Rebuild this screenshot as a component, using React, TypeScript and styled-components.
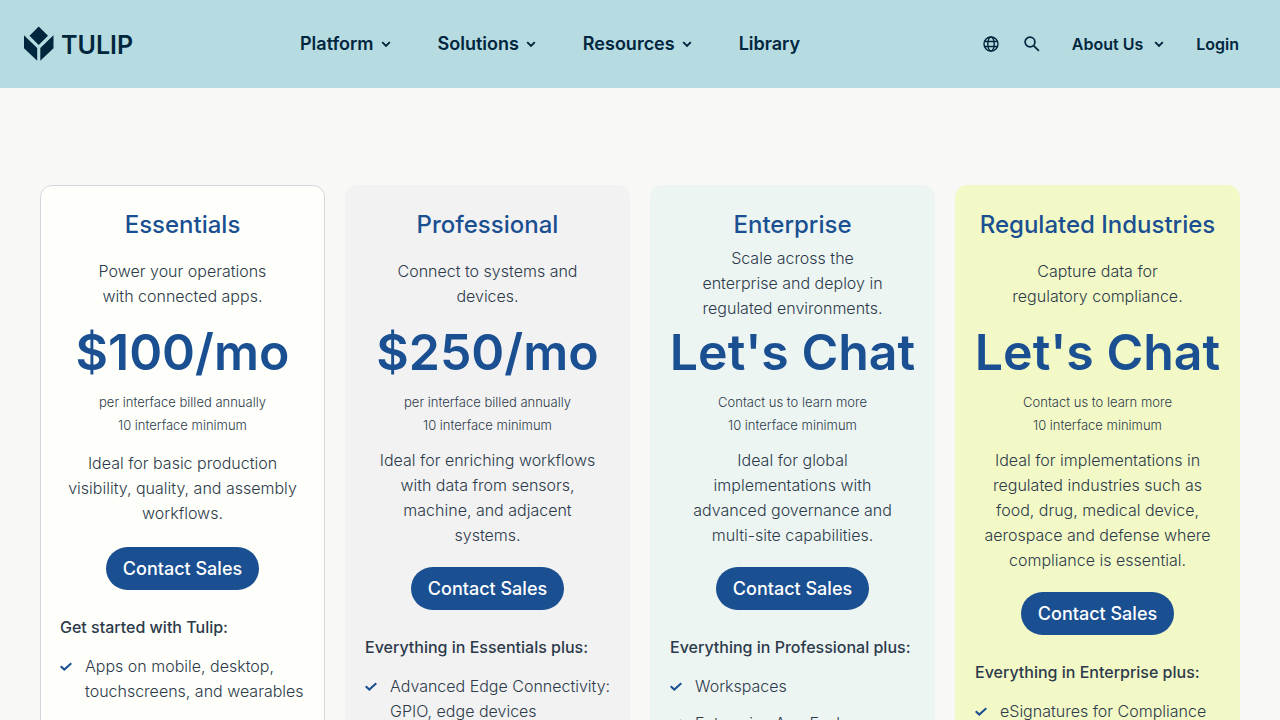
import React from "react";
import styled, { createGlobalStyle } from "styled-components";

const GlobalStyle = createGlobalStyle`
  * { box-sizing: border-box; }
  body {
    margin: 0;
    background: #f8f8f6;
    color: #2c3a4b;
    font-family: Inter, "Liberation Sans", sans-serif;
  }
`;

const Header = styled.header`
  display: flex;
  align-items: center;
  height: 88px;
  padding: 0 41px 0 24px;
  background: #b6dbe0;
  color: #00263e;
`;

const Logo = styled.a`
  display: flex;
  align-items: center;
  gap: 7px;
  width: 276px;
  color: #00263e;
  font: 600 25px/34px Inter, sans-serif;
  text-decoration: none;
`;

const Wordmark = styled.span`
  padding-top: 2px;
`;

const MainNav = styled.nav`
  display: flex;
  align-items: center;
  gap: 47px;
`;

const UtilityNav = styled.nav`
  display: flex;
  align-items: center;
  margin-left: auto;
  gap: 32px;
`;

const IconGroup = styled.div`
  display: flex;
  gap: 25px;
`;

const NavButton = styled.button<{ $small?: boolean }>`
  display: flex;
  align-items: center;
  gap: ${(p) => (p.$small ? 11 : 7)}px;
  padding: 0;
  border: 0;
  background: none;
  color: inherit;
  font: 600 ${(p) => (p.$small ? "16px/26px" : "18px/24px")} Inter, sans-serif;
  cursor: pointer;
`;

const NavLink = styled.a<{ $small?: boolean }>`
  color: inherit;
  font: 600 ${(p) => (p.$small ? "16px/26px" : "18px/24px")} Inter, sans-serif;
  text-decoration: none;
`;

const IconButton = styled.button`
  display: flex;
  padding: 0;
  border: 0;
  background: none;
  color: inherit;
  cursor: pointer;
`;

const Plans = styled.main`
  display: grid;
  grid-template-columns: repeat(4, minmax(0, 1fr));
  gap: 20px;
  padding: 97px 40px 40px;
`;

const Card = styled.section<{ $fill: string; $line?: string }>`
  display: flex;
  flex-direction: column;
  align-items: center;
  padding: 23px 19px 32px;
  border: 1px solid ${(p) => p.$line ?? p.$fill};
  border-radius: 12px;
  background: ${(p) => p.$fill};
  text-align: center;
`;

const PlanName = styled.h2`
  margin: 0;
  color: #1a4f91;
  font-size: 24px;
  font-weight: 500;
  line-height: 32px;
  white-space: nowrap;
`;

const Summary = styled.p`
  display: flex;
  align-items: center;
  height: 75px;
  margin: 5px 26px 0;
  font-size: 16px;
  font-weight: 300;
  line-height: 25px;
`;

const Price = styled.p`
  margin: 0;
  color: #1a4f91;
  font-size: 50px;
  font-weight: 600;
  line-height: 62px;
  white-space: nowrap;
`;

const Terms = styled.p`
  margin: 8px 0 0;
  font-size: 13px;
  font-weight: 300;
  line-height: 23px;
`;

const Ideal = styled.p`
  display: flex;
  align-items: center;
  min-height: 80px;
  margin: 11px 6px 0;
  font-size: 16px;
  font-weight: 300;
  line-height: 25px;
`;

const SalesButton = styled.button`
  height: 43px;
  margin: 19px 0 0;
  padding: 0 17px;
  border: 0;
  border-radius: 22px;
  background: #1a4f91;
  color: #fff;
  font: 500 18px/24px Inter, sans-serif;
  cursor: pointer;
`;

const ListTitle = styled.h3`
  align-self: stretch;
  margin: 25px 0 0;
  font-size: 16px;
  font-weight: 500;
  line-height: 24px;
  text-align: left;
  white-space: nowrap;
`;

const Features = styled.ul`
  align-self: stretch;
  display: grid;
  gap: 12px;
  margin: 15px -9px 0 0;
  padding: 0;
  list-style: none;
  text-align: left;
`;

const Feature = styled.li`
  display: flex;
  gap: 13px;
  font-size: 16px;
  font-weight: 300;
  line-height: 25px;

  svg { flex: none; margin-top: 8px; }
`;

const Chevron = () => (
  <svg width="10" height="7" viewBox="0 0 10 7" fill="none" aria-hidden="true">
    <path d="M1.2 1.2 5 5l3.800-3.800" stroke="currentColor" strokeWidth="1.9" />
  </svg>
);

const Check = () => (
  <svg width="12" height="9" viewBox="0 0 12 9" fill="none" aria-hidden="true">
    <path d="M.7 4.200 4.300 7.600 11.300 1.200" stroke="#1a4f91" strokeWidth="2" />
  </svg>
);

const Tulip = () => (
  <svg width="30" height="36" viewBox="0 0 30 36" fill="currentColor" aria-hidden="true">
    <path d="M14.700.500 24 9.700 14.700 19 5.500 9.700ZM0 9.300l13.200 12.700v12.800L0 22.300ZM29.500 9.300 16.300 22v12.800L29.500 22.300Z" />
  </svg>
);

const Globe = () => (
  <svg width="16" height="16" viewBox="0 0 16 16" fill="none" stroke="currentColor" strokeWidth="1.4" aria-hidden="true">
    <circle cx="8" cy="8" r="7" />
    <ellipse cx="8" cy="8" rx="3.200" ry="7" />
    <path d="M1.500 5.500h13M1.500 10.500h13" />
  </svg>
);

const Search = () => (
  <svg width="16" height="16" viewBox="0 0 16 16" fill="none" stroke="currentColor" strokeWidth="1.700" aria-hidden="true">
    <circle cx="6" cy="6" r="4.900" />
    <path d="m9.600 9.600 5.300 5.300" />
  </svg>
);

interface Plan {
  name: string;
  summary: string;
  price: string;
  terms: string;
  ideal: string;
  listTitle: string;
  features: string[];
  fill: string;
  line?: string;
}

const plans: Plan[] = [
  {
    name: "Essentials",
    summary: "Power your operations with connected apps.",
    price: "$100/mo",
    terms: "per interface billed annually",
    ideal: "Ideal for basic production visibility, quality, and assembly workflows.",
    listTitle: "Get started with Tulip:",
    features: ["Apps on mobile, desktop, touchscreens, and wearables"],
    fill: "#fefffa",
    line: "#d5d7dc",
  },
  {
    name: "Professional",
    summary: "Connect to systems and devices.",
    price: "$250/mo",
    terms: "per interface billed annually",
    ideal: "Ideal for enriching workflows with data from sensors, machine, and adjacent systems.",
    listTitle: "Everything in Essentials plus:",
    features: ["Advanced Edge Connectivity: GPIO, edge devices"],
    fill: "#f2f2f2",
  },
  {
    name: "Enterprise",
    summary: "Scale across the enterprise and deploy in regulated environments.",
    price: "Let's Chat",
    terms: "Contact us to learn more",
    ideal: "Ideal for global implementations with advanced governance and multi-site capabilities.",
    listTitle: "Everything in Professional plus:",
    features: ["Workspaces", "Enterprise App Exchange"],
    fill: "#edf5f2",
  },
  {
    name: "Regulated Industries",
    summary: "Capture data for regulatory compliance.",
    price: "Let's Chat",
    terms: "Contact us to learn more",
    ideal: "Ideal for implementations in regulated industries such as food, drug, medical device, aerospace and defense where compliance is essential.",
    listTitle: "Everything in Enterprise plus:",
    features: ["eSignatures for Compliance"],
    fill: "#f3f9c6",
  },
];

export default function App() {
  return (
    <>
      <GlobalStyle />
      <Header>
        <Logo href="#"><Tulip /><Wordmark>TULIP</Wordmark></Logo>
        <MainNav aria-label="Main">
          <NavButton>Platform<Chevron /></NavButton>
          <NavButton>Solutions<Chevron /></NavButton>
          <NavButton>Resources<Chevron /></NavButton>
          <NavLink href="#">Library</NavLink>
        </MainNav>
        <UtilityNav aria-label="Utility">
          <IconGroup>
            <IconButton aria-label="Language"><Globe /></IconButton>
            <IconButton aria-label="Search"><Search /></IconButton>
          </IconGroup>
          <NavButton $small>About Us<Chevron /></NavButton>
          <NavLink $small href="#">Login</NavLink>
        </UtilityNav>
      </Header>
      <Plans>
        {plans.map((plan) => (
          <Card key={plan.name} $fill={plan.fill} $line={plan.line}>
            <PlanName>{plan.name}</PlanName>
            <Summary>{plan.summary}</Summary>
            <Price>{plan.price}</Price>
            <Terms>{plan.terms}<br />10 interface minimum</Terms>
            <Ideal>{plan.ideal}</Ideal>
            <SalesButton>Contact Sales</SalesButton>
            <ListTitle>{plan.listTitle}</ListTitle>
            <Features>
              {plan.features.map((feature) => (
                <Feature key={feature}><Check />{feature}</Feature>
              ))}
            </Features>
          </Card>
        ))}
      </Plans>
    </>
  );
}
